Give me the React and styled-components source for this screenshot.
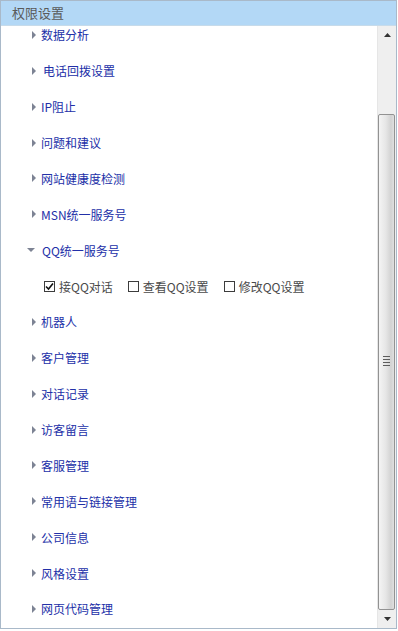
import React from 'react'
import styled, {createGlobalStyle} from "styled-components"

const Global = createGlobalStyle`
    html, body {
        margin: 0;
        padding: 0;
        background: #ffffff;
        font-family: "Noto Sans CJK SC", "Noto Sans", "Liberation Sans", sans-serif;
    }
`

const Panel = styled.div`
    width: 397px;
    height: 629px;
    box-sizing: border-box;
    border: 1px solid #a9b9c9;
    display: flex;
    flex-direction: column;
    background: #fff;
`
const Header = styled.div`
    height: 24px;
    flex-shrink: 0;
    background: #b3d8f6;
    border-bottom: 1px solid #c7dbea;
    color: #5a5a5a;
    font-size: 13px;
    line-height: 24px;
    padding-left: 11px;
`
const Body = styled.div`
    flex: 1;
    display: flex;
    min-height: 0;
`
const Viewport = styled.div`
    flex: 1;
    overflow: hidden;
`
const List = styled.ul`
    list-style: none;
    margin: -9px 0 0 0;
    padding: 0;
`
const Row = styled.li`
    height: 35.875px;
    display: flex;
    align-items: center;
    padding-left: ${p => p.$open ? "26px" : "31px"};
    font-size: 12px;
    color: #2230a8;
`
const Label = styled.span`
    margin-left: ${p => p.$indent ? "7px" : "5px"};
`
const Options = styled.li`
    height: 35.875px;
    display: flex;
    align-items: center;
    padding-left: 43px;
    font-size: 12px;
    color: #4a4a4a;
`
const Option = styled.label`
    display: flex;
    align-items: center;
    margin-right: 15px;
`
const Box = styled.span`
    width: 11px;
    height: 11px;
    box-sizing: border-box;
    border: 1px solid #3c3c3c;
    background: #fff;
    display: flex;
    align-items: center;
    justify-content: center;
    margin-right: 4px;
`
const Scrollbar = styled.div`
    width: 18px;
    flex-shrink: 0;
    display: flex;
    flex-direction: column;
    background: #efefef;
    border-left: 1px solid #e6e6e6;
`
const ScrollBtn = styled.div`
    height: 18px;
    display: flex;
    align-items: center;
    justify-content: center;
    flex-shrink: 0;
`
const Track = styled.div`
    flex: 1;
    display: flex;
    flex-direction: column;
`
const Gap = styled.div`
    height: ${p => p.$h}px;
    flex-shrink: 0;
`
const Thumb = styled.div`
    flex: 1;
    margin: 0 1px 0 0;
    border: 1px solid #929292;
    border-radius: 2px;
    background: linear-gradient(to right, #f4f4f4 0%, #e6e6e6 45%, #d2d2d2 80%, #e0e0e0 100%);
    display: flex;
    align-items: center;
    justify-content: center;
`
const Grip = styled.div`
    width: 7px;
    height: 2px;
    border-top: 1px solid #5c5c5c;
`
const Grips = styled.div`
    display: flex;
    flex-direction: column;
`

const RightArrow = () => (
    <svg width="4" height="8" viewBox="0 0 4 8"><path d="M0 0 L4 4 L0 8 Z" fill="#7d8394"/></svg>
)
const DownArrow = () => (
    <svg width="8" height="4" viewBox="0 0 8 4"><path d="M0 0 L8 0 L4 4 Z" fill="#7d8394"/></svg>
)
const Check = () => (
    <svg width="9" height="9" viewBox="0 0 9 9"><path d="M1 4.5 L3.5 7 L8 1.5" stroke="#111" strokeWidth="1.6" fill="none"/></svg>
)

const before = [
    {t: "数据分析"},
    {t: "电话回拨设置", indent: true},
    {t: "IP阻止"},
    {t: "问题和建议"},
    {t: "网站健康度检测"},
    {t: "MSN统一服务号"},
]
const after = ["机器人", "客户管理", "对话记录", "访客留言", "客服管理", "常用语与链接管理", "公司信息", "风格设置", "网页代码管理"]
const options = [
    {t: "接QQ对话", checked: true},
    {t: "查看QQ设置", checked: false},
    {t: "修改QQ设置", checked: false},
]

const App = () => {
    return (
        <Panel>
            <Global/>
            <Header>权限设置</Header>
            <Body>
                <Viewport>
                    <List>
                        {before.map(i => (
                            <Row key={i.t}><RightArrow/><Label $indent={i.indent}>{i.t}</Label></Row>
                        ))}
                        <Row $open><DownArrow/><Label $indent>QQ统一服务号</Label></Row>
                        <Options>
                            {options.map(o => (
                                <Option key={o.t}><Box>{o.checked && <Check/>}</Box>{o.t}</Option>
                            ))}
                        </Options>
                        {after.map(t => (
                            <Row key={t}><RightArrow/><Label>{t}</Label></Row>
                        ))}
                    </List>
                </Viewport>
                <Scrollbar>
                    <ScrollBtn>
                        <svg width="7" height="4" viewBox="0 0 7 4"><path d="M3.5 0 L7 4 L0 4 Z" fill="#333"/></svg>
                    </ScrollBtn>
                    <Track>
                        <Gap $h={70}/>
                        <Thumb>
                            <Grips><Grip/><Grip/><Grip/><Grip/></Grips>
                        </Thumb>
                    </Track>
                    <ScrollBtn>
                        <svg width="7" height="4" viewBox="0 0 7 4"><path d="M0 0 L7 0 L3.5 4 Z" fill="#333"/></svg>
                    </ScrollBtn>
                </Scrollbar>
            </Body>
        </Panel>
    )
}

export default App
